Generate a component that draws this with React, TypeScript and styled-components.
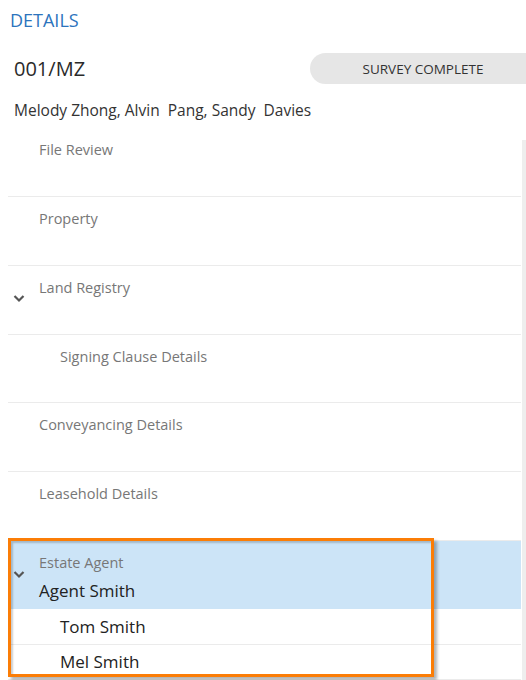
import React from 'react';
import styled, { createGlobalStyle } from 'styled-components';

const GlobalStyle = createGlobalStyle`
  html, body {
    margin: 0;
    padding: 0;
    background: #ffffff;
  }
  body {
    font-family: "Open Sans", "Noto Sans", "Liberation Sans", sans-serif;
    color: #333333;
  }
`;

const Page = styled.div`
  position: relative;
  width: 526px;
  height: 680px;
  overflow: hidden;
  background: #ffffff;
`;

const Header = styled.header`
  display: flex;
  flex-direction: column;
  height: 140px;
  box-sizing: border-box;
  padding: 8px 0 0 0;
`;

const Title = styled.h1`
  margin: 0 0 0 10px;
  font-size: 18px;
  line-height: 24px;
  font-weight: 400;
  color: #2c74bd;
`;

const RefRow = styled.div`
  display: flex;
  align-items: center;
  justify-content: space-between;
  margin-top: 21px;
`;

const RefCode = styled.div`
  margin-left: 14px;
  font-size: 20px;
  line-height: 31px;
  color: #2a2a2a;
`;

const StatusPill = styled.button`
  width: 236px;
  height: 31px;
  margin-right: -20px;
  border: none;
  border-radius: 16px 0 0 16px;
  background: #e6e6e6;
  font-family: inherit;
  font-size: 13.5px;
  color: #333333;
  padding: 0 10px 0 0;
  text-align: center;
`;

const Names = styled.div`
  margin: 16px 0 0 14px;
  font-size: 15.5px;
  line-height: 20px;
  color: #333333;
  white-space: pre;
`;

const ListArea = styled.div`
  display: flex;
  height: 540px;
  overflow: hidden;
`;

const ListContent = styled.div`
  flex: 1;
  margin-top: -13px;
  padding-left: 8px;
  padding-right: 1px;
`;

const ScrollTrack = styled.div`
  width: 4px;
  background: #eeeeee;
`;

const Row = styled.div<{ $selected?: boolean; $height: number; $divider?: boolean }>`
  position: relative;
  height: ${p => p.$height}px;
  box-sizing: border-box;
  border-top: 1px solid ${p => (p.$divider ? '#ebebeb' : 'transparent')};
  background: ${p => (p.$selected ? '#cce4f7' : 'transparent')};
  display: flex;
  flex-direction: column;
`;

const RowLabel = styled.div<{ $indent: number; $top: number }>`
  margin: ${p => p.$top}px 0 0 ${p => p.$indent}px;
  font-size: 14.5px;
  line-height: 20px;
  color: #777777;
`;

const RowValue = styled.div<{ $indent: number; $top?: number }>`
  margin: ${p => p.$top || 0}px 0 0 ${p => p.$indent}px;
  font-size: 17px;
  line-height: 24px;
  color: #222222;
`;

const Chevron = styled.svg<{ $top: number }>`
  position: absolute;
  left: 5px;
  top: ${p => p.$top}px;
  width: 12px;
  height: 9px;
`;

const Annotation = styled.div`
  position: absolute;
  left: 8px;
  top: 538px;
  width: 426px;
  height: 139px;
  box-sizing: border-box;
  border: 3px solid #fb7d06;
  box-shadow: 3px 3px 3px rgba(0, 0, 0, 0.3), inset 2px 2px 2px rgba(0, 0, 0, 0.2);
  pointer-events: none;
`;

const ChevronIcon = ({ top }: { top: number }) => (
  <Chevron $top={top} viewBox="0 0 12 9">
    <path d="M1.5 2 L6 6.5 L10.5 2" fill="none" stroke="#555555" strokeWidth="2.2" />
  </Chevron>
);

type Section = { label: string; indent: number; expanded?: boolean };

const sections: Section[] = [
  { label: 'File Review', indent: 31 },
  { label: 'Property', indent: 31 },
  { label: 'Land Registry', indent: 31, expanded: true },
  { label: 'Signing Clause Details', indent: 52 },
  { label: 'Conveyancing Details', indent: 31 },
  { label: 'Leasehold Details', indent: 31 },
];

const agents = ['Tom Smith', 'Mel Smith'];

export default function App() {
  return (
    <>
      <GlobalStyle />
      <Page>
        <Header>
          <Title>DETAILS</Title>
          <RefRow>
            <RefCode>001/MZ</RefCode>
            <StatusPill>SURVEY COMPLETE</StatusPill>
          </RefRow>
          <Names>{'Melody Zhong, Alvin  Pang, Sandy  Davies'}</Names>
        </Header>
        <ListArea>
          <ListContent>
            {sections.map((s, i) => (
              <Row key={s.label} $height={i === 0 ? 69 : 68.8} $divider={i > 0}>
                {s.expanded && <ChevronIcon top={28} />}
                <RowLabel $indent={s.indent} $top={12}>{s.label}</RowLabel>
              </Row>
            ))}
            <Row $height={68.8} $divider $selected>
              <ChevronIcon top={29} />
              <RowLabel $indent={31} $top={12}>Estate Agent</RowLabel>
              <RowValue $indent={31} $top={6}>Agent Smith</RowValue>
            </Row>
            {agents.map((a, i) => (
              <Row key={a} $height={35} $divider={i > 0}>
                <RowValue $indent={52} $top={5}>{a}</RowValue>
              </Row>
            ))}
            <Row $height={40} $divider />
          </ListContent>
          <ScrollTrack />
        </ListArea>
        <Annotation />
      </Page>
    </>
  );
}
